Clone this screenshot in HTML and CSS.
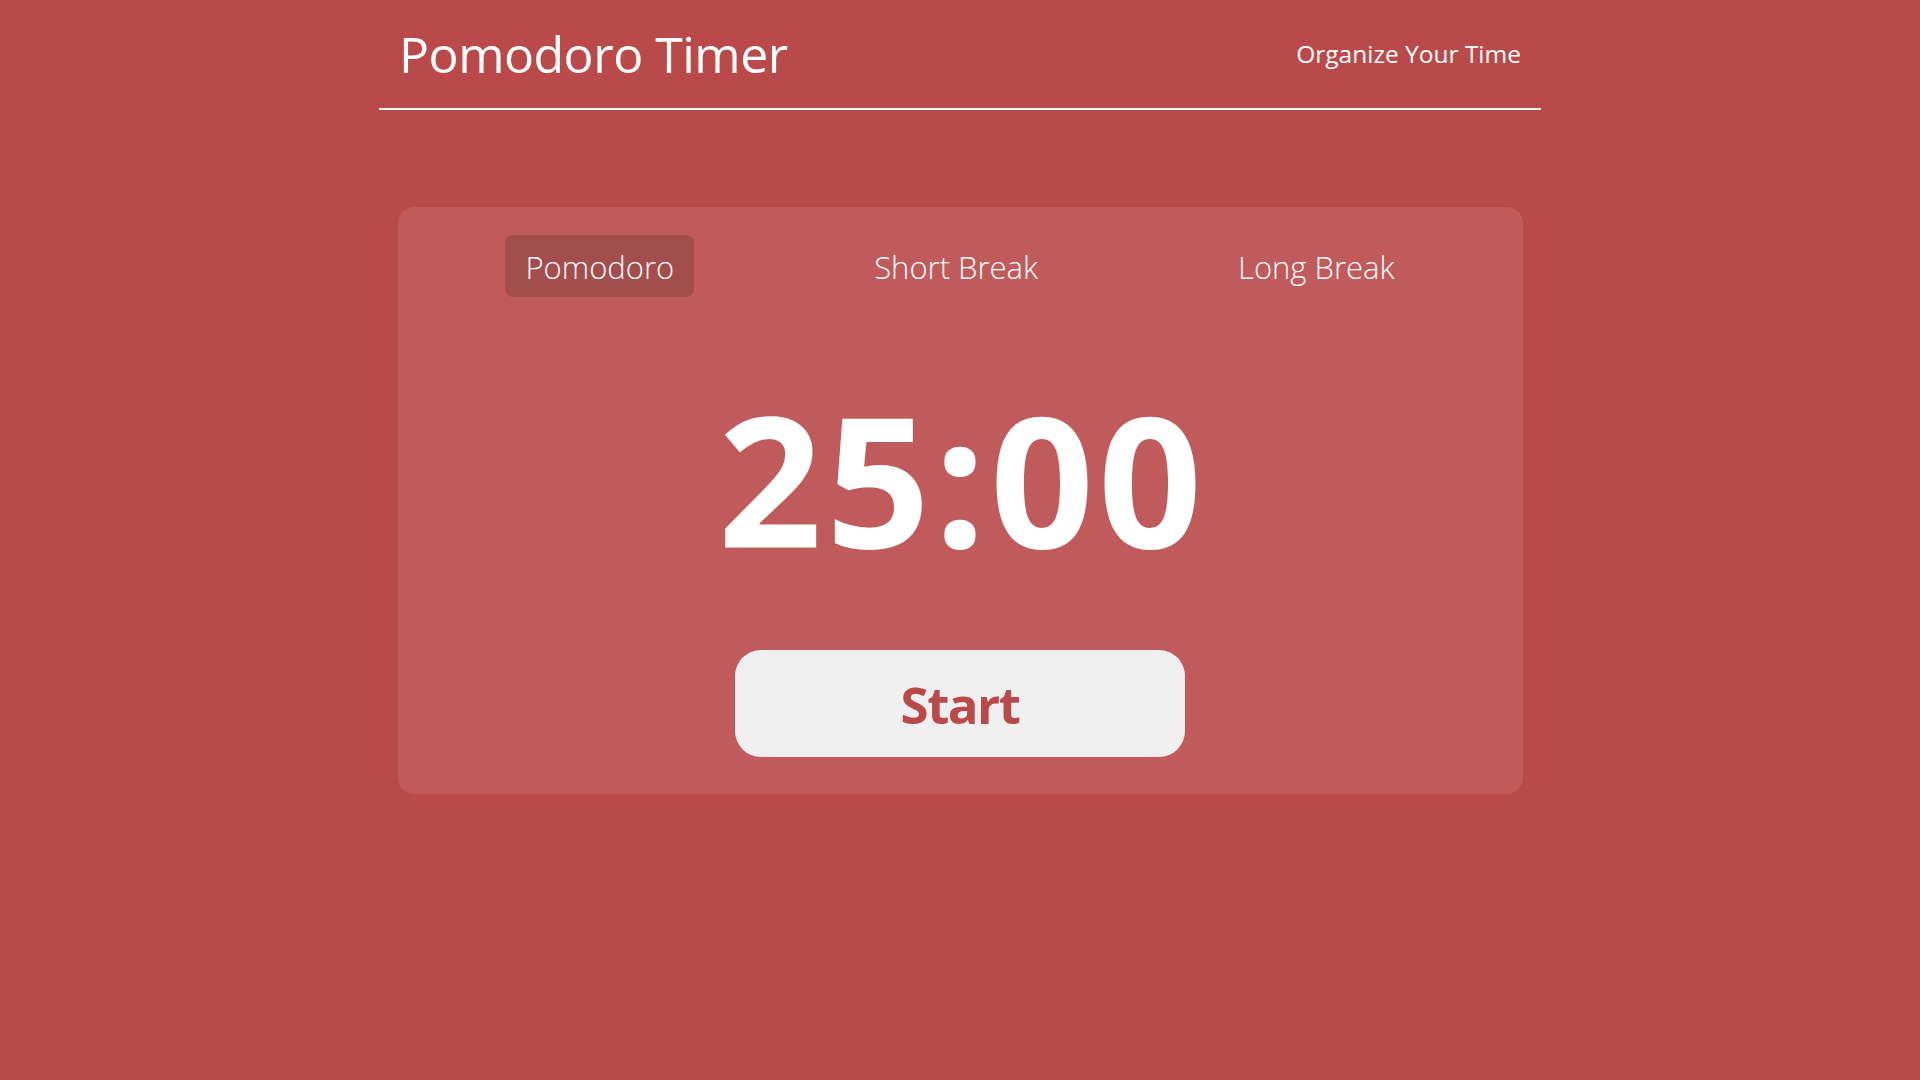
FILE: index.html
```html
<!DOCTYPE html>
<html lang="en">
<head>
<meta charset="utf-8">
<title>Pomodoro Timer</title>
<link rel="stylesheet" href="styles.css">
</head>
<body>
  <header class="site-header">
    <h1 class="site-title">Pomodoro Timer</h1>
    <span class="site-tagline">Organize Your Time</span>
  </header>
  <main class="timer-card">
    <nav class="mode-tabs">
      <button class="mode-tab is-active">Pomodoro</button>
      <button class="mode-tab">Short Break</button>
      <button class="mode-tab">Long Break</button>
    </nav>
    <div class="timer-display">25:00</div>
    <button class="start-button">Start</button>
  </main>
</body>
</html>
```
FILE: styles.css
```css
* { box-sizing: border-box; }

html, body {
  margin: 0;
  padding: 0;
}

body {
  background: #ba4949;
  color: #ffffff;
  font-family: "Open Sans", "Noto Sans", "Liberation Sans", sans-serif;
  min-height: 1080px;
}

.site-header {
  width: 1162px;
  height: 110px;
  margin: 0 auto;
  padding: 0 20px;
  display: flex;
  align-items: center;
  justify-content: space-between;
  border-bottom: 2px solid #ffffff;
}

.site-title {
  margin: 0;
  font-size: 50px;
  font-weight: 400;
  line-height: 1;
  letter-spacing: -0.5px;
}

.site-tagline {
  font-size: 24.5px;
  font-weight: 400;
  line-height: 1;
}

.timer-card {
  width: 1125px;
  margin: 97px auto 0;
  padding: 28px 28px 37px;
  background: rgba(255, 255, 255, 0.1);
  border-radius: 16px;
  display: flex;
  flex-direction: column;
  align-items: center;
}

.mode-tabs {
  align-self: stretch;
  display: flex;
  justify-content: space-around;
}

.mode-tab {
  height: 62px;
  padding: 2px 20px 0;
  border: none;
  background: transparent;
  color: #ffffff;
  font-family: inherit;
  font-size: 31px;
  font-weight: 300;
  border-radius: 8px;
  cursor: pointer;
}

.mode-tab.is-active {
  background: rgba(0, 0, 0, 0.15);
}

.timer-display {
  margin-top: 81px;
  height: 190px;
  font-size: 182px;
  line-height: 190px;
  font-weight: 700;
  letter-spacing: 4px;
  padding-left: 4px;
  padding-top: 4px;
}

.start-button {
  margin-top: 82px;
  width: 450px;
  height: 107px;
  border: none;
  border-radius: 26px;
  background: #efefef;
  color: #ba4949;
  font-family: inherit;
  font-size: 51px;
  font-weight: 700;
  letter-spacing: -1.5px;
  padding: 0 0 0 0;
  cursor: pointer;
}
```
